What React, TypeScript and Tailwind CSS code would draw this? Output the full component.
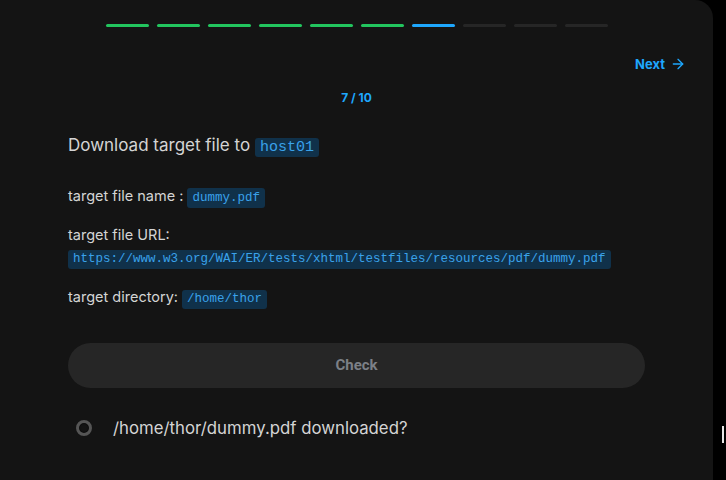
import { ArrowRight } from "lucide-react";

const steps = ["done", "done", "done", "done", "done", "done", "current", "todo", "todo", "todo"];

function Code({ children, className = "" }: { children: React.ReactNode; className?: string }) {
  return (
    <code
      className={`inline-block rounded-[3px] bg-[#10314a] px-[5px] font-['Liberation_Mono',monospace] text-[#3aa2ea] ${className}`}
    >
      {children}
    </code>
  );
}

export default function App() {
  return (
    <div className="flex h-[480px] w-[726px] bg-black font-['Inter',sans-serif]">
      <div className="flex h-[480px] w-[713px] flex-col rounded-tr-[18px] bg-[#141414]">
        <div className="mt-[24px] flex justify-center gap-[8px] pl-[1px]">
          {steps.map((s, i) => (
            <div
              key={i}
              className={
                s === "done"
                  ? "h-[3px] w-[43px] rounded-full bg-[#22c55e]"
                  : s === "current"
                  ? "h-[3px] w-[43px] rounded-full bg-[#1ea7fd]"
                  : "h-[3px] w-[43px] rounded-full bg-[#262626]"
              }
            />
          ))}
        </div>

        <div className="mt-[29px] flex justify-end pr-[27px]">
          <button className="flex items-center gap-[5px] text-[13px] font-bold leading-[16px] text-[#1ea7fd]">
            Next
            <ArrowRight size={16} strokeWidth={2} />
          </button>
        </div>

        <div className="mt-[18px] text-center text-[12px] font-bold leading-[16px] text-[#1ea7fd]">
          7 / 10
        </div>

        <div className="px-[68px]">
          <h2 className="mt-[26px] text-[17px] leading-[26px] text-[#d4d4d4]">
            Download target file to{" "}
            <Code className="py-[1px] text-[15px] leading-[17px]">host01</Code>
          </h2>

          <p className="mt-[26px] text-[14.5px] leading-[24px] text-[#d4d4d4]">
            target file name :{" "}
            <Code className="py-[2px] text-[12.5px] leading-[16px]">dummy.pdf</Code>
          </p>

          <p className="mt-[15px] text-[14.5px] leading-[24px] text-[#d4d4d4]">target file URL:</p>
          <div className="mt-[-3px]">
            <Code className="py-[2px] text-[12.5px] leading-[15px]">
              https://www.w3.org/WAI/ER/tests/xhtml/testfiles/resources/pdf/dummy.pdf
            </Code>
          </div>

          <p className="mt-[16px] text-[14.5px] leading-[24px] text-[#d4d4d4]">
            target directory:{" "}
            <Code className="py-[2px] text-[12.5px] leading-[15px]">/home/thor</Code>
          </p>

          <button className="mt-[34px] flex h-[45px] w-full items-center justify-center rounded-full bg-[#262626] font-['Roboto',sans-serif] text-[15px] font-bold text-[#7c8087]">
            Check
          </button>

          <div className="mt-[28px] flex items-center">
            <span className="ml-[8px] h-[16px] w-[16px] rounded-full border-[3px] border-[#555] bg-[#141414] shadow-[inset_0_0_2px_#000]" />
            <span className="ml-[21px] text-[16.8px] leading-[24px] text-[#d4d4d4]">
              /home/thor/dummy.pdf downloaded?
            </span>
          </div>
        </div>
      </div>

      <div className="flex w-[13px] flex-col">
        <div className="ml-[9px] mt-[426px] h-[17px] w-[2px] bg-[#e5e5e5]" />
      </div>
    </div>
  );
}
